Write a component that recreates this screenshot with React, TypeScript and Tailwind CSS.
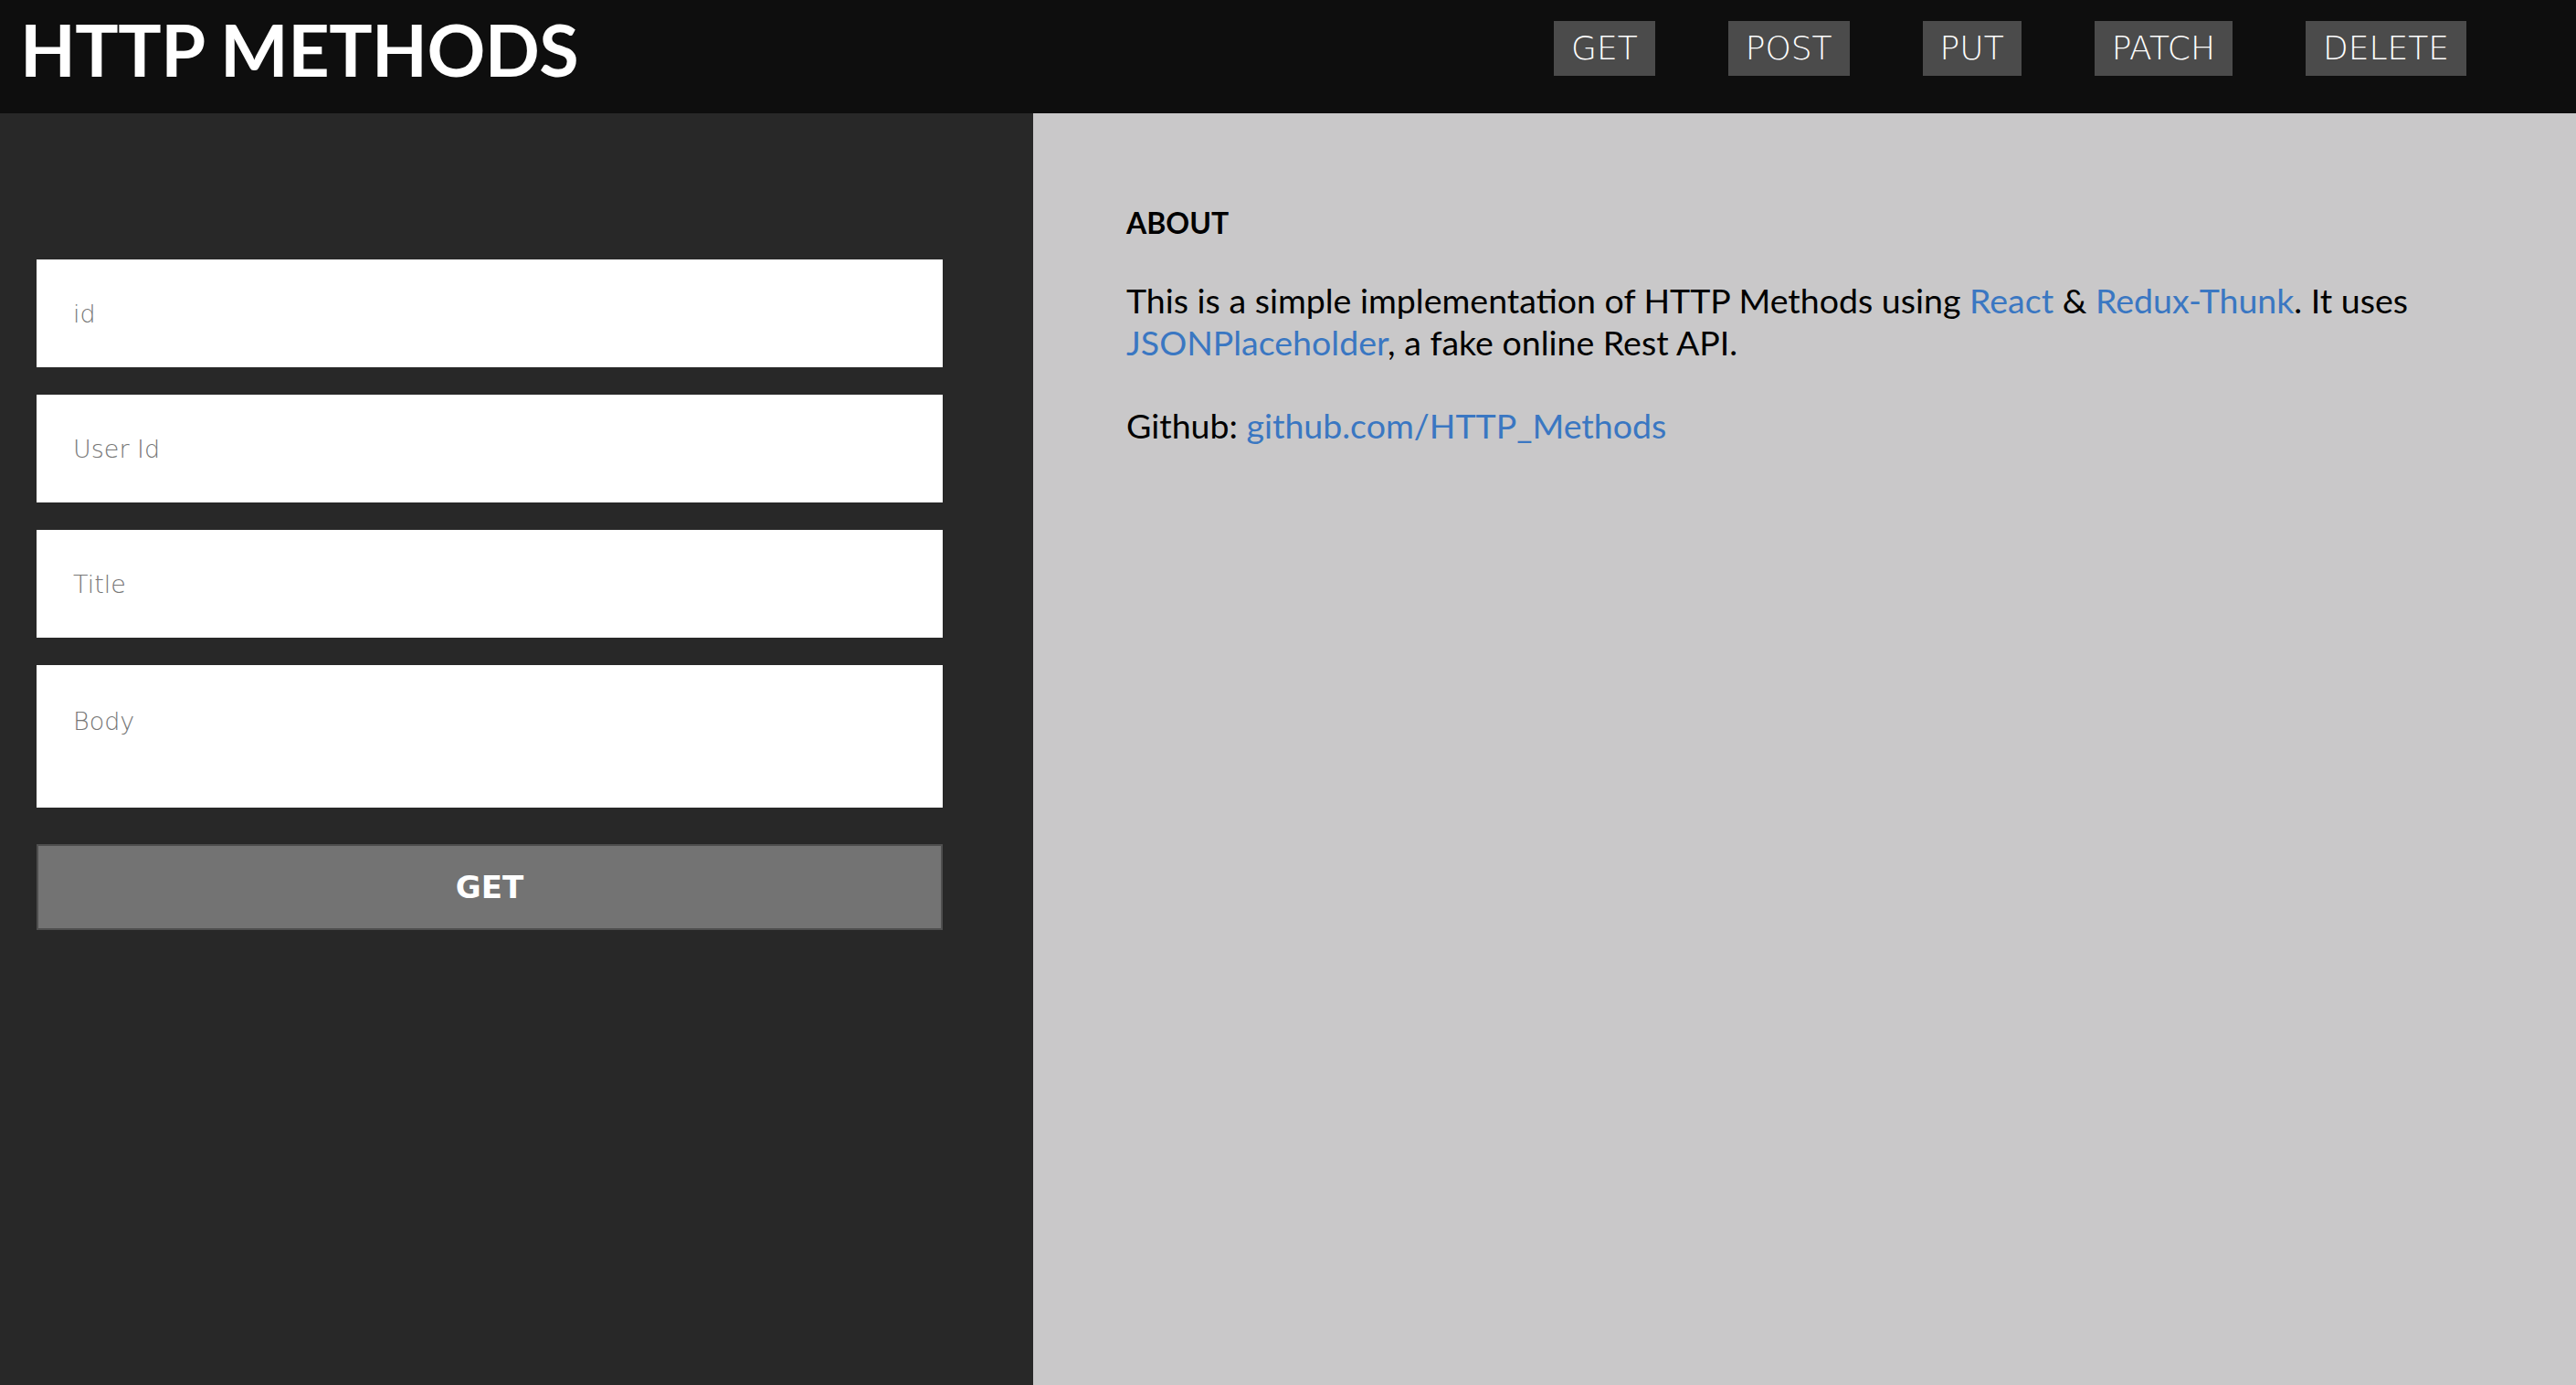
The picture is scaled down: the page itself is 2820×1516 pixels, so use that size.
import React from "react";

const methods = ["GET", "POST", "PUT", "PATCH", "DELETE"];

const fields = [
  { name: "id", placeholder: "id" },
  { name: "userId", placeholder: "User Id" },
  { name: "title", placeholder: "Title" },
];

export default function App() {
  return (
    <div className="flex h-[1516px] w-full flex-col overflow-hidden font-['Lato',sans-serif]">
      <header className="flex h-[124px] shrink-0 items-center justify-between bg-[#0e0e0e] pb-[18px] pl-[22px] pr-[120px]">
        <h1 className="text-[79px] font-bold leading-none tracking-[-0.5px] text-white">
          HTTP METHODS
        </h1>
        <nav className="flex items-center gap-[80px]">
          {methods.map((m) => (
            <button
              key={m}
              type="button"
              className="h-[60px] bg-[#4b4b4b] px-[19px] font-['DejaVu_Sans',sans-serif] text-[36px] font-extralight leading-none text-white"
            >
              {m}
            </button>
          ))}
        </nav>
      </header>

      <main className="flex flex-1">
        <section className="w-[1131px] shrink-0 bg-[#282828] px-[40px] pt-[160px]">
          <form className="flex w-[992px] flex-col gap-[30px]">
            {fields.map((f) => (
              <input
                key={f.name}
                name={f.name}
                placeholder={f.placeholder}
                className="h-[118px] w-full bg-white px-[40px] font-['DejaVu_Sans',sans-serif] text-[27px] font-extralight text-[#333] outline-none placeholder:text-[#777]"
              />
            ))}
            <textarea
              name="body"
              placeholder="Body"
              className="h-[156px] w-full resize-none bg-white px-[40px] pt-[42px] font-['DejaVu_Sans',sans-serif] text-[27px] font-extralight text-[#333] outline-none placeholder:text-[#777]"
            />
            <button
              type="button"
              className="mt-[10px] h-[94px] w-full border-2 border-[#4f4f4f] bg-[#737373] font-['DejaVu_Sans',sans-serif] text-[34px] font-bold text-white"
            >
              GET
            </button>
          </form>
        </section>

        <section className="flex-1 bg-[#c9c8c9] pl-[102px] pr-[120px] pt-[104px] text-black">
          <h2 className="text-[32px] font-bold leading-[32px]">ABOUT</h2>
          <p className="mt-[46px] max-w-[1470px] text-[37.5px] leading-[46px]">
            This is a simple implementation of HTTP Methods using{" "}
            <a className="text-[#3a77c2]">React</a> &amp;{" "}
            <a className="text-[#3a77c2]">Redux-Thunk</a>. It uses{" "}
            <a className="text-[#3a77c2]">JSONPlaceholder</a>, a fake online Rest API.
          </p>
          <p className="mt-[45px] text-[37.5px] leading-[46px]">
            Github: <a className="text-[#3a77c2]">github.com/HTTP_Methods</a>
          </p>
        </section>
      </main>
    </div>
  );
}
